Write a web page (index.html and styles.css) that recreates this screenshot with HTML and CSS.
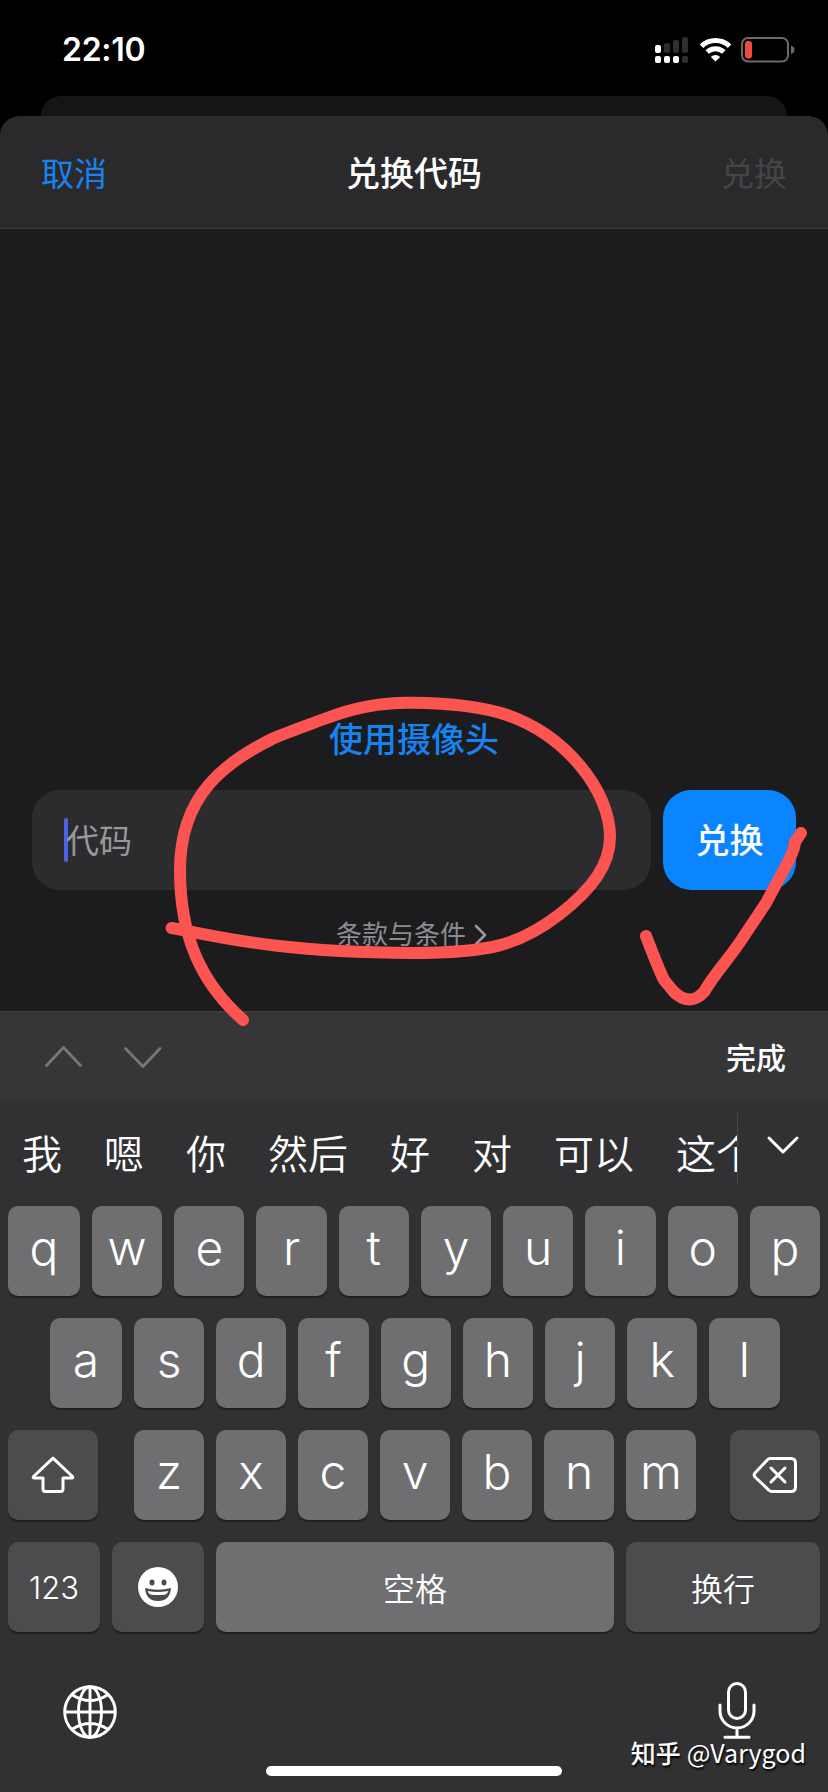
FILE: index.html
```html
<!DOCTYPE html>
<html lang="zh-CN">
<head>
<meta charset="utf-8">
<title>兑换代码</title>
<link rel="stylesheet" href="styles.css">
</head>
<body>
<div class="phone">
  <div class="status">
    <span class="time">22:10</span>
    <svg class="status-icons" width="142" height="30" viewBox="0 0 142 30">
      <g fill="#fff">
        <rect x="1" y="10" width="6" height="8" rx="2"/>
        <rect x="1" y="21" width="6" height="7" rx="2"/>
        <rect x="10" y="21" width="6" height="7" rx="2"/>
        <rect x="19" y="21" width="6" height="7" rx="2"/>
      </g>
      <g fill="#2f2f2f">
        <rect x="10" y="8" width="6" height="10" rx="2"/>
        <rect x="19" y="5" width="6" height="13" rx="2"/>
        <rect x="28" y="2" width="6" height="16" rx="2"/>
        <rect x="28" y="21" width="6" height="7" rx="2"/>
      </g>
      <g fill="none" stroke="#fff" stroke-width="5">
        <path d="M47.500 11.200a20 20 0 0 1 28 0"/>
        <path d="M53.200 17a12 12 0 0 1 16.600 0"/>
      </g>
      <path d="M61.500 26.500l-4.700-4.600a6.800 6.800 0 0 1 9.400 0z" fill="#fff"/>
      <rect x="88" y="3" width="46" height="23.500" rx="6" fill="none" stroke="#6b6b6b" stroke-width="2"/>
      <rect x="91" y="6" width="7" height="17.500" rx="3" fill="#f04a40"/>
      <path d="M137 10.500q3.500 1.200 3.500 4.300t-3.500 4.300z" fill="#6b6b6b"/>
    </svg>
  </div>
  <div class="back-card"></div>
  <main class="sheet">
    <header class="nav">
      <span class="cancel">取消</span>
      <h1 class="title">兑换代码</h1>
      <span class="redeem-off">兑换</span>
    </header>
    <section class="content">
      <a class="camera">使用摄像头</a>
      <div class="form">
        <div class="field"><span class="caret"></span><span class="hint">代码</span></div>
        <div class="submit">兑换</div>
      </div>
      <div class="terms">
        <span>条款与条件</span>
        <svg width="14" height="22" viewBox="0 0 14 22"><path d="M2 2l9 9-9 9" fill="none" stroke="#98989c" stroke-width="2.600" stroke-linecap="round" stroke-linejoin="round"/></svg>
      </div>
    </section>
  </main>
  <section class="keyboard">
    <div class="toolbar">
      <svg width="120" height="28" viewBox="0 0 120 28" fill="none" stroke="#77777a" stroke-width="2.800" stroke-linecap="round" stroke-linejoin="round">
        <path d="M3.500 22.500l17-18 17 18"/><path d="M82.500 5.500l17.500 18 17-18"/>
      </svg>
      <span class="done">完成</span>
    </div>
    <div class="candidates">
      <div class="words"><span>我</span><span>嗯</span><span>你</span><span>然后</span><span>好</span><span>对</span><span>可以</span><span>这个</span></div>
      <svg class="expand" width="34" height="20" viewBox="0 0 34 20"><path d="M3 3l14 14 14-14" fill="none" stroke="#fff" stroke-width="3" stroke-linecap="round" stroke-linejoin="round"/></svg>
    </div>
    <div class="keys">
      <div class="row"><span class="key">q</span><span class="key">w</span><span class="key">e</span><span class="key">r</span><span class="key">t</span><span class="key">y</span><span class="key">u</span><span class="key">i</span><span class="key">o</span><span class="key">p</span></div>
      <div class="row row-home"><span class="key">a</span><span class="key">s</span><span class="key">d</span><span class="key">f</span><span class="key">g</span><span class="key">h</span><span class="key">j</span><span class="key">k</span><span class="key">l</span></div>
      <div class="row row-shift">
        <span class="key dark">
          <svg width="46" height="40" viewBox="0 0 46 40"><path d="M23 3.200L3.500 21.500q-1 1.500.8 1.500H13v11q0 2.500 2.500 2.500h15q2.500 0 2.500-2.500V23h8.700q1.800 0 .8-1.500z" fill="none" stroke="#fff" stroke-width="3" stroke-linejoin="round"/></svg>
        </span>
        <div class="letters"><span class="key">z</span><span class="key">x</span><span class="key">c</span><span class="key">v</span><span class="key">b</span><span class="key">n</span><span class="key">m</span></div>
        <span class="key dark">
          <svg width="46" height="40" viewBox="0 0 46 40" fill="none" stroke="#fff" stroke-width="3" stroke-linecap="round" stroke-linejoin="round"><path d="M18 3.500h21q4.500 0 4.500 4.500v24q0 4.500-4.500 4.500H20q-1.800 0-3-1.200L3 22q-1.700-2 0-4L15.500 4.700q1-1.200 2.500-1.200z"/><path d="M19 13l14 14M33 13L19 27"/></svg>
        </span>
      </div>
      <div class="row row-bottom">
        <span class="key dark numeric">123</span>
        <span class="key dark">
          <svg width="42" height="42" viewBox="0 0 42 42"><circle cx="21" cy="21" r="20" fill="#fff"/><ellipse cx="15" cy="16.500" rx="2.500" ry="3" fill="#4c4c4e"/><ellipse cx="27" cy="16.500" rx="2.500" ry="3" fill="#4c4c4e"/><path d="M8 22q13 3.500 26 0q-1 13-13 13T8 22z" fill="#4c4c4e"/><path d="M10.500 25q10.500 2 21 0q-1 2.700-3 3.500-7.500 1.200-15 0-2-.8-3-3.500z" fill="#fff"/></svg>
        </span>
        <span class="key word">空格</span>
        <span class="key dark word">换行</span>
      </div>
    </div>
    <footer class="dock">
      <svg class="globe" width="54" height="54" viewBox="0 0 54 54" fill="none" stroke="#fff" stroke-width="2.900">
        <circle cx="27" cy="27" r="25.300"/><ellipse cx="27" cy="27" rx="11.500" ry="25.300"/><path d="M27 2v50M2 27h50M9.500 10q17.500 11 35 0M9.500 44q17.500-11 35 0"/>
      </svg>
      <svg class="mic" width="40" height="60" viewBox="0 0 40 60" fill="none" stroke="#fff" stroke-width="3" stroke-linecap="round">
        <rect x="11.500" y="3.500" width="17" height="35" rx="8.500"/><path d="M3 25v6a17 17 0 0 0 34 0v-6M20 48v9M8 57.300h24"/>
      </svg>
    </footer>
    <div class="home-bar"></div>
  </section>
  <div class="watermark"><b>知乎</b><span>@Varygod</span></div>
  <svg class="marks" width="828" height="1792" viewBox="0 0 828 1792" fill="none" stroke="#fc5451" stroke-width="12" stroke-linecap="round" stroke-linejoin="round">
    <path d="M171.600 928C222 937 274 952 412 953C490 953 520 945 560 914C592 889 610 865 610 837C610 790 565 735 507 715C478 705 445 703 412 702.700C375 702 345 711 327 718C308 725 290 731 274 738C225 762 180 795 180 870C180 935 200 982 243 1020"/>
    <path d="M646 936C654 957 659 970 664 980L674 992Q690 1007 704 992C715 973 728 960 740 942L766 903L788 862Q795 848 795 842L801 833"/>
  </svg>
</div>
</body>
</html>
```
FILE: styles.css
```css
* { box-sizing: border-box; }
body { margin: 0; background: #000; }
.phone {
  position: relative;
  display: flex;
  flex-direction: column;
  width: 828px;
  height: 1792px;
  overflow: hidden;
  background: #000;
  color: #fff;
  font-family: Inter, "Noto Sans CJK SC", sans-serif;
}
svg { display: block; flex: none; }

.status {
  display: flex;
  justify-content: space-between;
  height: 96px;
  padding: 0 32px 0 62px;
}
.time { margin-top: 30px; font-size: 32px; line-height: 40px; font-weight: 600; letter-spacing: -0.3px; }
.status-icons { margin-top: 35px; }

.back-card { height: 20px; margin: 0 41px; border-radius: 20px 20px 0 0; background: #151517; }

.sheet {
  display: flex;
  flex-direction: column;
  height: 895px;
  border-radius: 20px 20px 0 0;
  background: #1c1c1e;
  font-size: 34px;
}
.nav {
  display: grid;
  grid-template-columns: 1fr auto 1fr;
  align-items: center;
  height: 113px;
  padding: 3px 41px 0;
  border-bottom: 1px solid #3c3c3e;
  border-radius: 20px 20px 0 0;
  background: #2a2a2c;
  line-height: 50px;
}
.cancel { color: #1683ee; font-size: 33px; }
.title { margin: 0; font-size: 34px; font-weight: 500; }
.redeem-off { justify-self: end; color: #454547; font-size: 33px; }

.content { display: flex; flex-direction: column; align-items: center; padding-top: 486px; }
.camera { color: #1683f0; font-weight: 500; line-height: 50px; }
.form { display: flex; gap: 12px; width: 100%; margin-top: 25px; padding: 0 32px; }
.field {
  display: flex;
  flex: 1;
  align-items: center;
  height: 100px;
  padding-left: 32px;
  border-radius: 28px;
  background: #2c2c2e;
}
.caret { width: 4px; height: 44px; border-radius: 2px; background: #4a62e8; }
.hint { margin-left: -2px; padding-bottom: 2px; color: #98989c; font-size: 33px; }
.submit {
  display: flex;
  align-items: center;
  justify-content: center;
  width: 133px;
  height: 100px;
  padding-bottom: 3px;
  border-radius: 28px;
  background: #0a84ff;
  font-weight: 500;
}
.terms { display: flex; align-items: center; gap: 8px; margin-top: 25px; padding-right: 4px; color: #8c8c90; font-size: 26px; line-height: 40px; }

.keyboard { display: flex; flex-direction: column; height: 781px; background: #313133; }
.toolbar {
  display: flex;
  align-items: center;
  justify-content: space-between;
  height: 89px;
  padding: 2px 42px 0 43px;
  border-top: 1px solid #404042;
  background: #363638;
}
.done { padding-bottom: 3px; font-size: 30px; font-weight: 500; }
.candidates { display: flex; height: 106px; padding-top: 13px; }
.words {
  display: flex;
  gap: 42px;
  width: 738px;
  height: 72px;
  padding-left: 22px;
  overflow: hidden;
  border-right: 1px solid #48484a;
  font-size: 40px;
  font-weight: 350;
  line-height: 84px;
  white-space: nowrap;
}
.words span { flex: none; }
.expand { margin: 22px 0 0 28px; }

.keys { display: flex; flex-direction: column; gap: 22px; padding: 0 8px; }
.row { display: grid; grid-template-columns: 72px repeat(9, 1fr); gap: 12px; height: 90px; }
.row-home { grid-template-columns: 72px repeat(8, 1fr); padding: 0 40.500px 0 42px; }
.row-shift { grid-template-columns: 90px 562px 90px; gap: 0; justify-content: space-between; }
.letters { display: grid; grid-template-columns: repeat(7, 1fr); gap: 12px; margin: 0 -1px 0 1px; }
.row-bottom { grid-template-columns: 92px 92px 398px 1fr; }
.key {
  display: flex;
  align-items: center;
  justify-content: center;
  height: 90px;
  padding-bottom: 8px;
  border-radius: 10px;
  background: #6f6f71;
  box-shadow: 0 2px 1px #1f1f21;
  font-size: 48px;
  font-weight: 350;
}
.dark { padding-bottom: 0; background: #4c4c4e; }
.numeric { font-size: 31px; font-weight: 350; }
.word { padding-bottom: 0; font-size: 32px; font-weight: 350; }

.dock { display: flex; justify-content: space-between; height: 134px; padding: 48px 71px 0 63px; }
.globe { margin-top: 5px; }
.home-bar { width: 296px; height: 10px; margin-left: 266px; border-radius: 5px; background: #fff; }

.watermark {
  position: absolute;
  right: 22px;
  top: 1734px;
  display: flex;
  gap: 6px;
  font: 400 25px/36px "Noto Sans CJK SC", sans-serif;
  text-shadow: 1px 2px 2px #000;
}
.watermark b { font-weight: 500; }
.marks { position: absolute; left: 0; top: 0; }
```
